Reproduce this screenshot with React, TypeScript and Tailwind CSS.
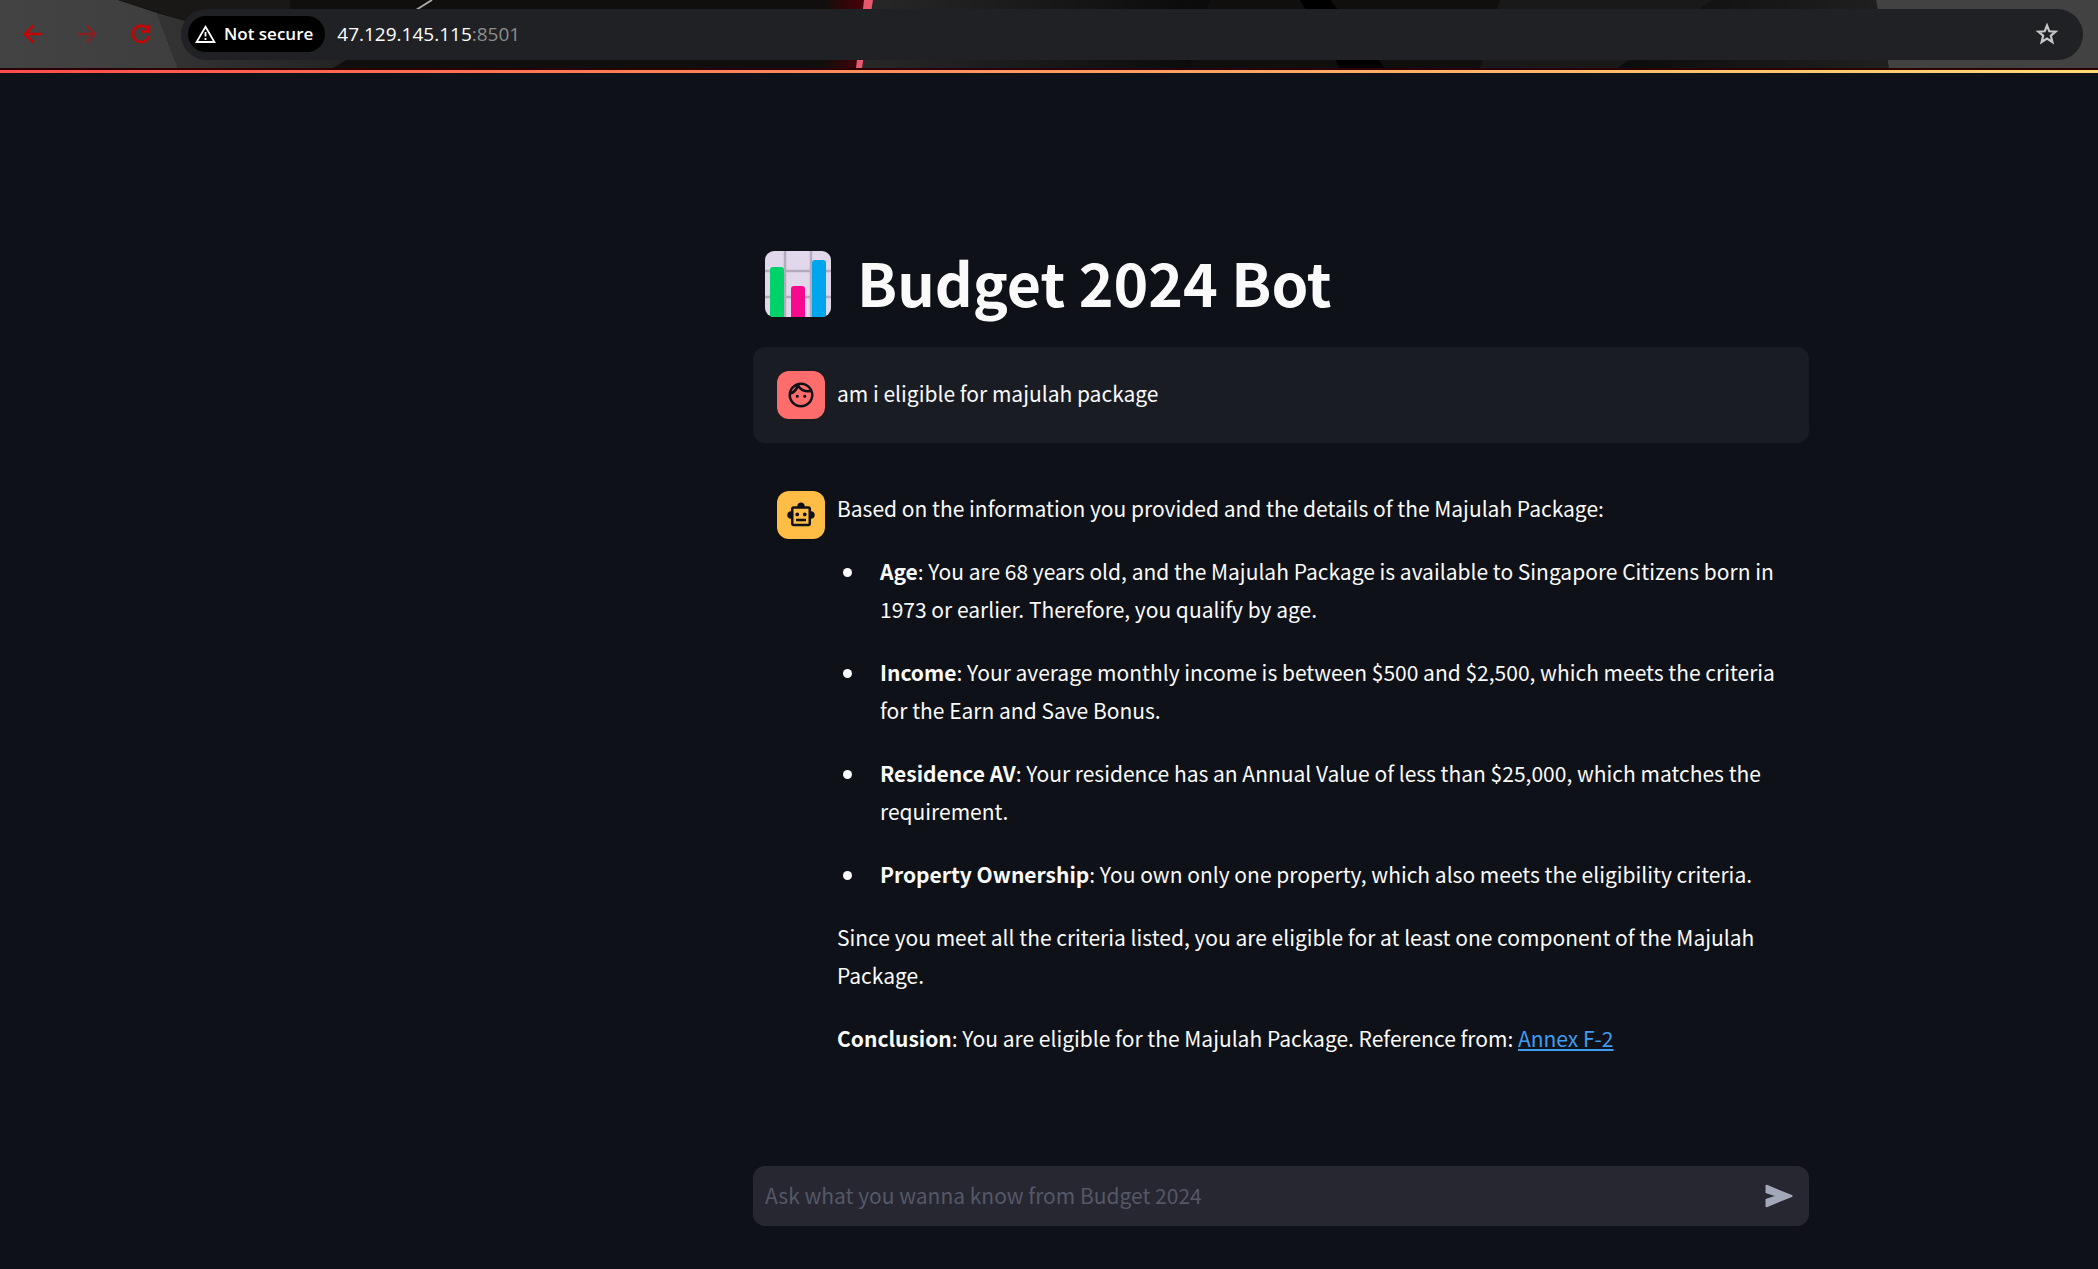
import { useState } from "react";
import type { ReactNode } from "react";
import { MdOutlineFace, MdOutlineSmartToy } from "react-icons/md";

function ToolbarArt() {
  return (
    <svg
      className="absolute inset-0 h-full w-full"
      viewBox="0 0 2098 68"
      preserveAspectRatio="none"
      aria-hidden="true"
    >
      <defs>
        <linearGradient id="slate" x1="0" x2="1">
          <stop offset="0" stopColor="#434343" />
          <stop offset="1" stopColor="#3e3e3e" />
        </linearGradient>
        <linearGradient id="ash" x1="0" x2="1">
          <stop offset="0" stopColor="#343434" />
          <stop offset="1" stopColor="#232323" />
        </linearGradient>
        <linearGradient id="coal" x1="0" x2="1">
          <stop offset="0" stopColor="#282828" />
          <stop offset="1" stopColor="#0a0a0a" />
        </linearGradient>
        <linearGradient id="dusk" x1="0" x2="1">
          <stop offset="0" stopColor="#0c0c0c" />
          <stop offset="1" stopColor="#202020" />
        </linearGradient>
        <linearGradient id="glow" x1="0" x2="1">
          <stop offset="0" stopColor="#4a0008" stopOpacity="0" />
          <stop offset="1" stopColor="#4a0008" />
        </linearGradient>
      </defs>
      <rect width="2098" height="68" fill="#100f0d" />
      <path d="M0 0H118L157 13L178 68H0Z" fill="url(#slate)" />
      <path d="M118 0H290V52L182 20Z" fill="#191816" />
      <path d="M157 13L182 20L346 60L333 68H178Z" fill="url(#ash)" />
      <path d="M432 0L416 10" stroke="#a8a8a8" strokeWidth="2" />
      <path d="M872 0H1210L1190 68H862Z" fill="url(#coal)" />
      <path d="M828 0H864L856 68H822Z" fill="url(#glow)" />
      <path d="M864 0H873L862 68H856Z" fill="#e8586e" />
      <path d="M1300 0H1330L1385 68H1340Z" fill="#000000" />
      <path d="M1500 0H1712L1618 68H1480Z" fill="#191919" />
      <path d="M1712 0H1876L1889 68H1618Z" fill="url(#dusk)" />
      <path d="M1876 0H2098V68H1889Z" fill="#424242" />
    </svg>
  );
}

function LineIcon({ children }: { children: ReactNode }) {
  return (
    <svg className="h-[26px] w-[26px]" viewBox="0 0 26 26" fill="none" stroke="currentColor" strokeWidth="2.4" aria-hidden="true">
      {children}
    </svg>
  );
}

function BrowserBar() {
  return (
    <header className="relative h-[68px] shrink-0 overflow-hidden">
      <ToolbarArt />
      <div className="relative flex h-full items-center pr-[15px] font-['Open_Sans',sans-serif]">
        <nav className="flex w-[181px] shrink-0 items-center gap-7 pl-5 text-[#cc0000]" aria-label="History">
          <button type="button" aria-label="Back">
            <LineIcon><path d="M22 13H6M13.500 4.500L5 13L13.500 21.500" /></LineIcon>
          </button>
          <button type="button" aria-label="Forward" className="opacity-50">
            <LineIcon><path d="M4 13H20M12.500 4.500L21 13L12.500 21.500" /></LineIcon>
          </button>
          <button type="button" aria-label="Reload">
            <LineIcon>
              <path d="M21 15A8.200 8.200 0 1 1 19.500 7.800L21 10" />
              <path d="M21 3.500V10.500H14" />
            </LineIcon>
          </button>
        </nav>
        <div className="flex h-[51px] flex-1 items-center rounded-full bg-[#202124] pr-6 pl-[7px]">
          <button type="button" className="flex h-9 items-center gap-2 rounded-full bg-black pr-3 pl-[7px] text-[17px] font-semibold text-white">
            <svg className="h-[18px] w-[21px]" viewBox="0 0 21 18" fill="none" stroke="currentColor" strokeWidth="1.800" aria-hidden="true">
              <path d="M10.500 1.800L19.400 17H1.600Z" />
              <path d="M10.500 7V11.500M10.500 13V15" />
            </svg>
            Not secure
          </button>
          <p className="ml-3 text-[19px] text-white">
            47.129.145.115<span className="text-[#8c8c8c]">:8501</span>
          </p>
          <button type="button" aria-label="Bookmark this page" className="ml-auto text-[#c7c7c7]">
            <svg className="h-6 w-6" viewBox="0 0 24 24" fill="none" stroke="currentColor" strokeWidth="2.200" aria-hidden="true">
              <path d="M12 3.500L14.300 9.300L20.600 9.700L15.800 13.700L17.400 20L12 16.600L6.600 20L8.200 13.700L3.400 9.700L9.700 9.300Z" />
            </svg>
          </button>
        </div>
      </div>
    </header>
  );
}

function ChartEmblem() {
  return (
    <svg className="h-[66px] w-[66px] shrink-0" viewBox="0 0 66 66" aria-hidden="true">
      <defs>
        <clipPath id="tile"><rect width="66" height="66" rx="9" /></clipPath>
      </defs>
      <g clipPath="url(#tile)">
        <rect width="66" height="66" fill="#e1d8ec" />
        <path d="M20 0V66M46 0V66M0 20H66M0 46H66" stroke="#b4acbc" strokeWidth="2.500" />
        <path d="M5 66V19a3 3 0 0 1 3-3h8a3 3 0 0 1 3 3V66Z" fill="#00d26a" />
        <path d="M26 66V38a3 3 0 0 1 3-3h8a3 3 0 0 1 3 3V66Z" fill="#f70a8d" />
        <path d="M47 66V12a3 3 0 0 1 3-3h8a3 3 0 0 1 3 3V66Z" fill="#00a6ed" />
      </g>
    </svg>
  );
}

function Finding({ label, children }: { label: string; children: ReactNode }) {
  return (
    <li className="flex gap-7">
      <span className="mt-4 ml-1.5 h-[9px] w-[9px] shrink-0 rounded-full bg-[#fafafa]" />
      <p>
        <strong className="font-bold">{label}</strong>: {children}
      </p>
    </li>
  );
}

export default function App() {
  const [draft, setDraft] = useState("");
  return (
    <div className="flex min-h-screen flex-col bg-[#0e1117] font-['Noto_Sans_CJK_JP','Noto_Sans_CJK_SC',sans-serif] text-[21px] leading-[38px] text-[#fafafa]">
      <BrowserBar />
      <div className="h-[5px] shrink-0 border-t-2 border-[#2a0000] bg-linear-to-r from-[#ff4b4b] to-[#ffd875]" />
      <div className="flex flex-1 flex-col pl-[464px]">
        <main className="mx-auto w-full max-w-[1056px] flex-1 pt-[160px]">
          <h1 className="flex h-[102px] items-center gap-[26px] pl-3 text-[59px] font-bold">
            <ChartEmblem />
            <span className="pb-1">Budget 2024 Bot</span>
          </h1>
          <section className="mt-3 flex items-center gap-3 rounded-xl bg-[#1a1c24] p-6">
            <span className="flex h-12 w-12 shrink-0 items-center justify-center rounded-xl bg-[#ff6c6c] text-3xl text-[#0e1117]">
              <MdOutlineFace />
            </span>
            <p className="pb-1">am i eligible for majulah package</p>
          </section>
          <section className="mt-6 flex items-start gap-3 py-[22px] pr-4 pl-6">
            <span className="mt-0.5 flex h-12 w-12 shrink-0 items-center justify-center rounded-xl bg-[#ffbd45] text-3xl text-[#0e1117]">
              <MdOutlineSmartToy />
            </span>
            <div className="flex flex-1 flex-col gap-[25px]">
              <p>Based on the information you provided and the details of the Majulah Package:</p>
              <ul className="flex flex-col gap-[25px]">
                <Finding label="Age">
                  You are 68 years old, and the Majulah Package is available to Singapore Citizens born in 1973 or earlier. Therefore, you qualify by age.
                </Finding>
                <Finding label="Income">
                  Your average monthly income is between $500 and $2,500, which meets the criteria for the Earn and Save Bonus.
                </Finding>
                <Finding label="Residence AV">
                  Your residence has an Annual Value of less than $25,000, which matches the requirement.
                </Finding>
                <Finding label="Property Ownership">
                  You own only one property, which also meets the eligibility criteria.
                </Finding>
              </ul>
              <p>Since you meet all the criteria listed, you are eligible for at least one component of the Majulah Package.</p>
              <p>
                <strong className="font-bold">Conclusion</strong>: You are eligible for the Majulah Package. Reference from:{" "}
                <a href="#annex-f-2" className="text-[#3d9df3] underline">Annex F-2</a>
              </p>
            </div>
          </section>
        </main>
        <form
          className="mx-auto mb-[43px] flex h-[60px] w-full max-w-[1056px] items-center rounded-xl bg-[#262730] pr-4 pl-3"
          onSubmit={(event) => event.preventDefault()}
        >
          <input
            className="min-w-0 flex-1 bg-transparent pb-0.5 outline-none placeholder:text-[#555867]"
            aria-label="Message"
            placeholder="Ask what you wanna know from Budget 2024"
            value={draft}
            onChange={(event) => setDraft(event.target.value)}
          />
          <button type="submit" aria-label="Send" className="text-[#a3a8b8]">
            <svg className="h-6 w-7" viewBox="0 0 28 24" fill="currentColor" stroke="currentColor" strokeWidth="2" strokeLinejoin="round" aria-hidden="true">
              <path d="M1.500 1.800L26.500 12L1.500 22.200V15.600L13 12L1.500 8.400Z" />
            </svg>
          </button>
        </form>
      </div>
    </div>
  );
}
